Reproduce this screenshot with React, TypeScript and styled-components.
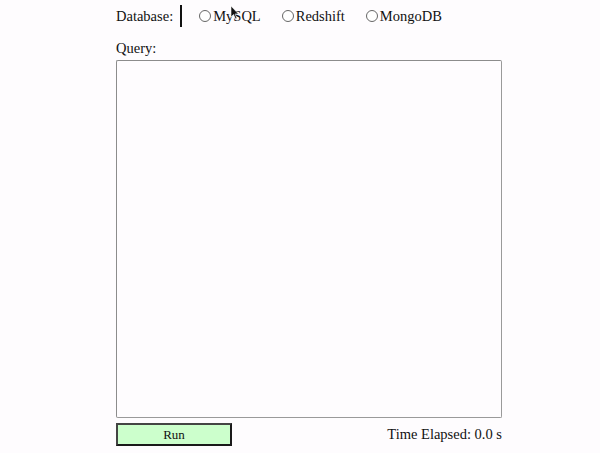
import React from 'react'
import styled, { createGlobalStyle } from 'styled-components'

const GlobalStyle = createGlobalStyle`
  html, body {
    margin: 0;
    padding: 0;
    background: #fefcfe;
  }
  body {
    font-family: "Liberation Serif", "DejaVu Serif", serif;
    color: #111;
  }
`

const Page = styled.div`
  position: relative;
  width: 386px;
  padding: 5px 0 0 116px;
  font-size: 14.5px;
`

const TopRow = styled.div`
  display: flex;
  align-items: center;
  height: 22px;
`

const Label = styled.span`
  line-height: 17px;
`

const Caret = styled.span`
  width: 2px;
  height: 22px;
  background: #111;
  margin: 0 17px 0 7px;
`

const Option = styled.label`
  display: flex;
  align-items: center;
  gap: 2px;
  margin-right: 21px;
  line-height: 17px;
`

const Radio = styled.input.attrs({ type: 'radio' })`
  appearance: none;
  margin: 0;
  width: 12px;
  height: 12px;
  border: 1px solid #666;
  border-radius: 50%;
  background: #fff;
  box-sizing: border-box;
`

const QueryLabel = styled.div`
  margin-top: 13px;
  line-height: 17px;
`

const QueryBox = styled.textarea`
  display: block;
  box-sizing: border-box;
  width: 386px;
  height: 358px;
  margin: 3px 0 0;
  border: 1px solid #8c8c8c;
  border-right-color: #9a9a9a;
  border-bottom-color: #9a9a9a;
  border-radius: 2px;
  background: #fefcfe;
  resize: none;
  font-family: "Liberation Mono", monospace;
`

const BottomRow = styled.div`
  display: flex;
  justify-content: space-between;
  align-items: center;
  margin-top: 5px;
`

const RunButton = styled.button`
  width: 116px;
  height: 23px;
  box-sizing: border-box;
  border: 2px solid #1a1a1a;
  border-top-color: #444;
  border-left-color: #444;
  background: #ccffcc;
  font-family: "Liberation Serif", serif;
  font-size: 13px;
  color: #111;
  padding: 0;
`

const Elapsed = styled.span`
  line-height: 17px;
`

const Pointer = styled.svg`
  position: absolute;
  left: 230px;
  top: 5px;
`

const databases = ['MySQL', 'Redshift', 'MongoDB']

const App = () => {
  return (
    <>
      <GlobalStyle />
      <Page>
        <TopRow>
          <Label>Database:</Label>
          <Caret />
          {databases.map((db) => (
            <Option key={db}>
              <Radio name="db" value={db} />
              {db}
            </Option>
          ))}
        </TopRow>
        <QueryLabel>Query:</QueryLabel>
        <QueryBox />
        <BottomRow>
          <RunButton>Run</RunButton>
          <Elapsed>Time Elapsed: 0.0 s</Elapsed>
        </BottomRow>
        <Pointer width="10" height="15" viewBox="0 0 10 15">
          <path d="M1 1 L1 12 L3.5 9.5 L5.5 14 L7 13.3 L5 9 L8.5 9 Z" fill="#111" stroke="#fff" strokeWidth="0.6" />
        </Pointer>
      </Page>
    </>
  )
}

export default App
